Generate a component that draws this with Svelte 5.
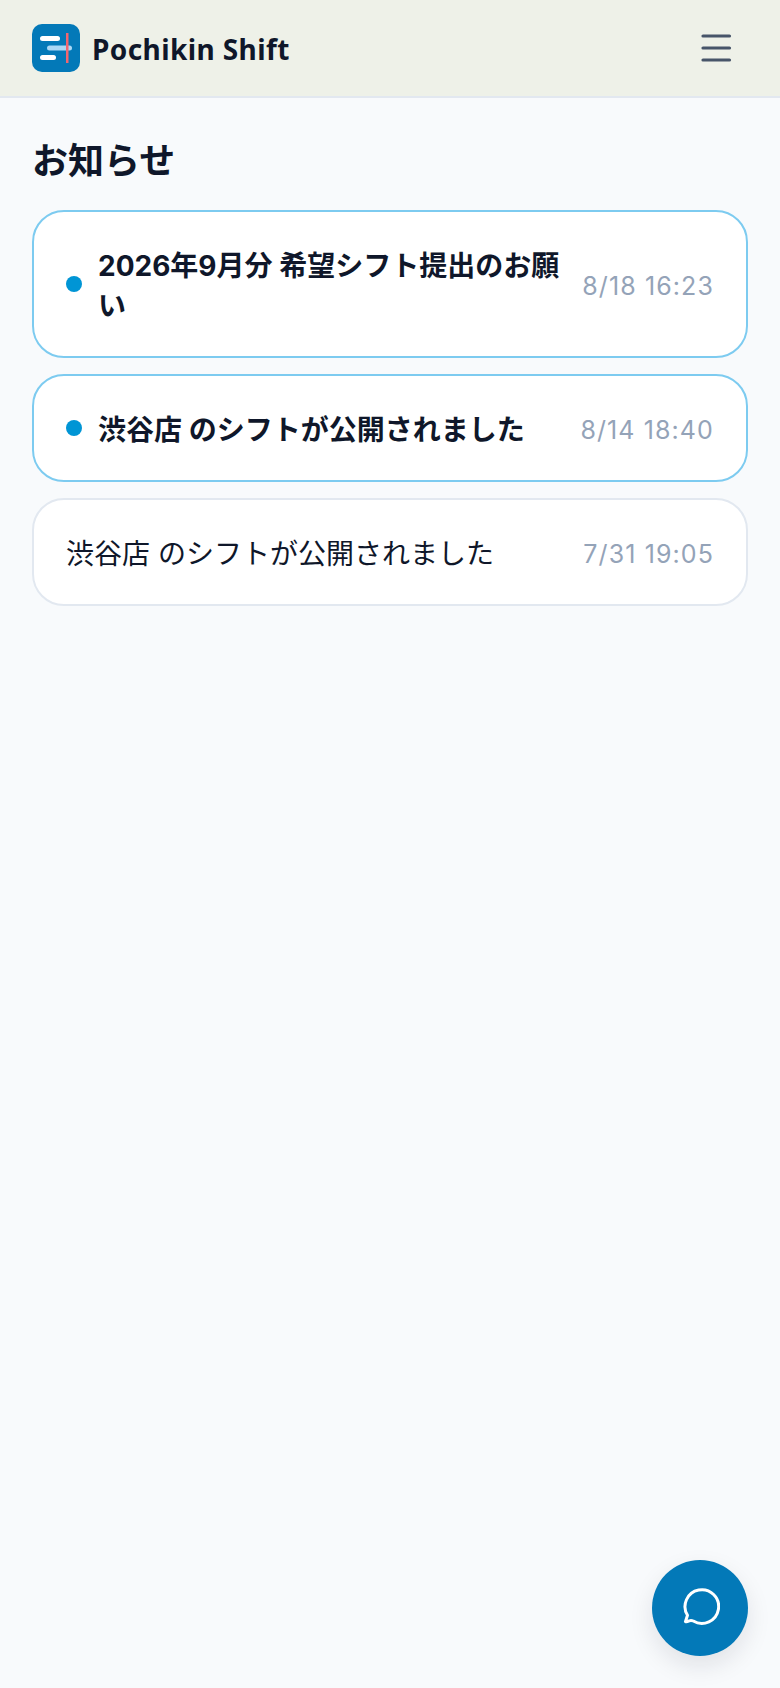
<script lang="ts">
	type Notice = { title: string; date: string; unread: boolean };

	const notices: Notice[] = [
		{ title: '2026年9月分 希望シフト提出のお願い', date: '8/18 16:23', unread: true },
		{ title: '渋谷店 のシフトが公開されました', date: '8/14 18:40', unread: true },
		{ title: '渋谷店 のシフトが公開されました', date: '7/31 19:05', unread: false }
	];
</script>

<div class="page">
	<header class="topbar">
		<div class="brand">
			<svg class="logo" viewBox="0 0 48 48" aria-hidden="true">
				<rect width="48" height="48" rx="10" fill="#0379b8" />
				<rect x="8" y="12" width="20" height="5" rx="2.5" fill="#fff" />
				<rect x="15" y="21.500" width="25" height="5" rx="2.5" fill="#aad8f5" />
				<rect x="8" y="31" width="16" height="5" rx="2.5" fill="#fff" />
				<rect x="34" y="9" width="2.500" height="30" fill="#f2666f" />
			</svg>
			<span class="name">Pochikin Shift</span>
		</div>
		<button class="menu" type="button" aria-label="メニュー">
			<svg viewBox="0 0 32 32" width="32" height="32" aria-hidden="true">
				<path d="M3 4h26.500M3 16h26.500M3 28h26.500" stroke="#475569" stroke-width="3.200" stroke-linecap="round" fill="none" />
			</svg>
		</button>
	</header>

	<main class="content">
		<h1>お知らせ</h1>
		<ul class="list">
			{#each notices as item}
				<li class="card" class:unread={item.unread}>
					{#if item.unread}
						<span class="dot"></span>
					{/if}
					<span class="title">{item.title}</span>
					<time>{item.date}</time>
				</li>
			{/each}
		</ul>
	</main>

	<button class="fab" type="button" aria-label="チャット">
		<svg viewBox="0 0 40 40" width="40" height="40" aria-hidden="true">
			<path d="M5.500 33.500l2-6.200A16.800 16.800 0 1 1 13.300 33c-1.600-.7-2.500-.8-4-.2-1.500.6-2.300.9-3 .9-.8 0-1-.3-.8-.2z" fill="none" stroke="#fff" stroke-width="3" stroke-linejoin="round" stroke-linecap="round" />
		</svg>
	</button>
</div>

<style>
	:global(body) {
		background: #f8fafc;
		font-family: 'Noto Sans', 'Noto Sans CJK JP', sans-serif;
		color: #0f172a;
	}

	.page {
		min-height: 1688px;
		position: relative;
	}

	.topbar {
		height: 96px;
		box-sizing: content-box;
		display: flex;
		align-items: center;
		justify-content: space-between;
		padding: 0 48px 0 32px;
		background: #eef1e8;
		border-bottom: 2px solid #e2e8f0;
	}

	.brand {
		display: flex;
		align-items: center;
		gap: 12px;
	}

	.logo {
		width: 48px;
		height: 48px;
		display: block;
	}

	.name {
		font-size: 28px;
		font-weight: 700;
		letter-spacing: 0.4px;
		padding-top: 2px;
	}

	.menu {
		border: 0;
		background: none;
		padding: 0;
		width: 32px;
		height: 32px;
		display: block;
	}

	.content {
		padding: 39px 32px;
	}

	h1 {
		margin: 0 0 25px;
		font-size: 36px;
		line-height: 48px;
		font-weight: 700;
	}

	.list {
		list-style: none;
		margin: 0;
		padding: 0;
		display: flex;
		flex-direction: column;
		gap: 16px;
	}

	.card {
		display: flex;
		align-items: center;
		gap: 16px;
		padding: 32px;
		background: #fff;
		border: 2px solid #e2e8f0;
		border-radius: 32px;
		font-size: 28px;
		line-height: 40px;
	}

	.card.unread {
		border-color: #7dcbf0;
	}

	.dot {
		width: 16px;
		height: 16px;
		border-radius: 50%;
		background: #0095d5;
		flex: none;
	}

	.title {
		flex: 1;
		min-width: 0;
		font-family: 'Inter', 'Noto Sans CJK JP', sans-serif;
		padding-top: 2px;
		margin-bottom: -2px;
	}

	.unread .title {
		font-weight: 700;
	}

	time {
		flex: none;
		font-family: 'Inter', sans-serif;
		font-size: 25px;
		letter-spacing: 1.1px;
		color: #94a3b8;
		padding-top: 2px;
		margin-bottom: -2px;
	}

	.fab {
		position: absolute;
		right: 32px;
		bottom: 32px;
		width: 96px;
		height: 96px;
		border: 0;
		border-radius: 50%;
		background: #0379b8;
		box-shadow: 0 10px 24px rgba(15, 23, 42, 0.1);
		display: flex;
		align-items: center;
		justify-content: center;
		padding: 0;
	}
</style>
